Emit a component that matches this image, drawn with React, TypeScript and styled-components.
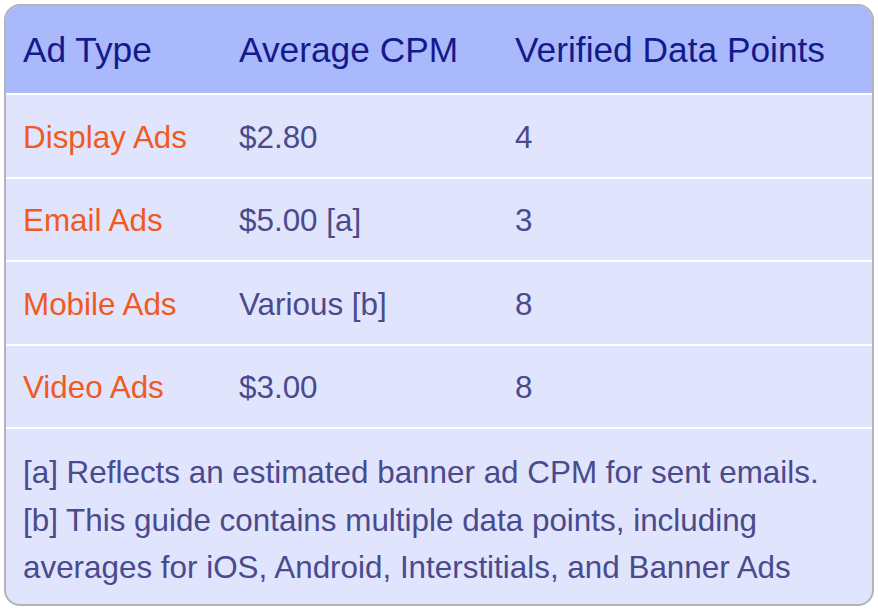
import React from 'react'
import styled, { createGlobalStyle } from 'styled-components'

const GlobalStyle = createGlobalStyle`
    body {
        margin: 0;
        background: #ffffff;
        font-family: "Liberation Sans", Arial, sans-serif;
    }
`

const Frame = styled.div`
    margin: 4px;
    width: 870px;
    height: 602px;
    box-sizing: border-box;
    border: 2px solid #b3b3b8;
    border-radius: 16px;
    overflow: hidden;
    background-color: #e0e4fc;
`

const Table = styled.table`
    width: 100%;
    border-collapse: collapse;
    table-layout: fixed;
`

const HeadRow = styled.tr`
    height: 88px;
    background-color: #a9b9fc;
`

const HeadCell = styled.th`
    text-align: left;
    font-weight: normal;
    font-size: 35.3px;
    color: #141a8c;
    padding: 0 0 0 17px;
    white-space: nowrap;
`

const Row = styled.tr<{ $tall?: boolean }>`
    height: ${p => p.$tall ? 84 : 83}px;
    border-top: 2px solid #ffffff;
`

const Cell = styled.td<{ $accent?: boolean }>`
    font-size: 31.4px;
    color: ${p => p.$accent ? '#f05a1f' : '#4a4a8c'};
    padding: 3px 0 0 17px;
    white-space: nowrap;
`

const NoteRow = styled.tr`
    border-top: 2px solid #ffffff;
`

const NoteCell = styled.td`
    font-size: 31.4px;
    line-height: 47.5px;
    color: #4a4a8c;
    padding: 20px 17px 10px 17px;
`

const rows = [
    { type: 'Display Ads', cpm: '$2.80', points: '4' },
    { type: 'Email Ads', cpm: '$5.00 [a]', points: '3' },
    { type: 'Mobile Ads', cpm: 'Various [b]', points: '8' },
    { type: 'Video Ads', cpm: '$3.00', points: '8' },
]

const App = () => {
    return (
    <>
        <GlobalStyle />
        <Frame>
            <Table>
                <colgroup>
                    <col style={{ width: 216 }} />
                    <col style={{ width: 276 }} />
                    <col />
                </colgroup>
                <thead>
                    <HeadRow>
                        <HeadCell>Ad Type</HeadCell>
                        <HeadCell>Average CPM</HeadCell>
                        <HeadCell>Verified Data Points</HeadCell>
                    </HeadRow>
                </thead>
                <tbody>
                    {rows.map((row, key) => (
                        <Row key={key} $tall={key % 2 === 0}>
                            <Cell $accent>{row.type}</Cell>
                            <Cell>{row.cpm}</Cell>
                            <Cell>{row.points}</Cell>
                        </Row>
                    ))}
                    <NoteRow>
                        <NoteCell colSpan={3}>
                            [a] Reflects an estimated banner ad CPM for sent emails.<br />
                            [b] This guide contains multiple data points, including<br />
                            averages for iOS, Android, Interstitials, and Banner Ads
                        </NoteCell>
                    </NoteRow>
                </tbody>
            </Table>
        </Frame>
    </>
  )
}

export default App
